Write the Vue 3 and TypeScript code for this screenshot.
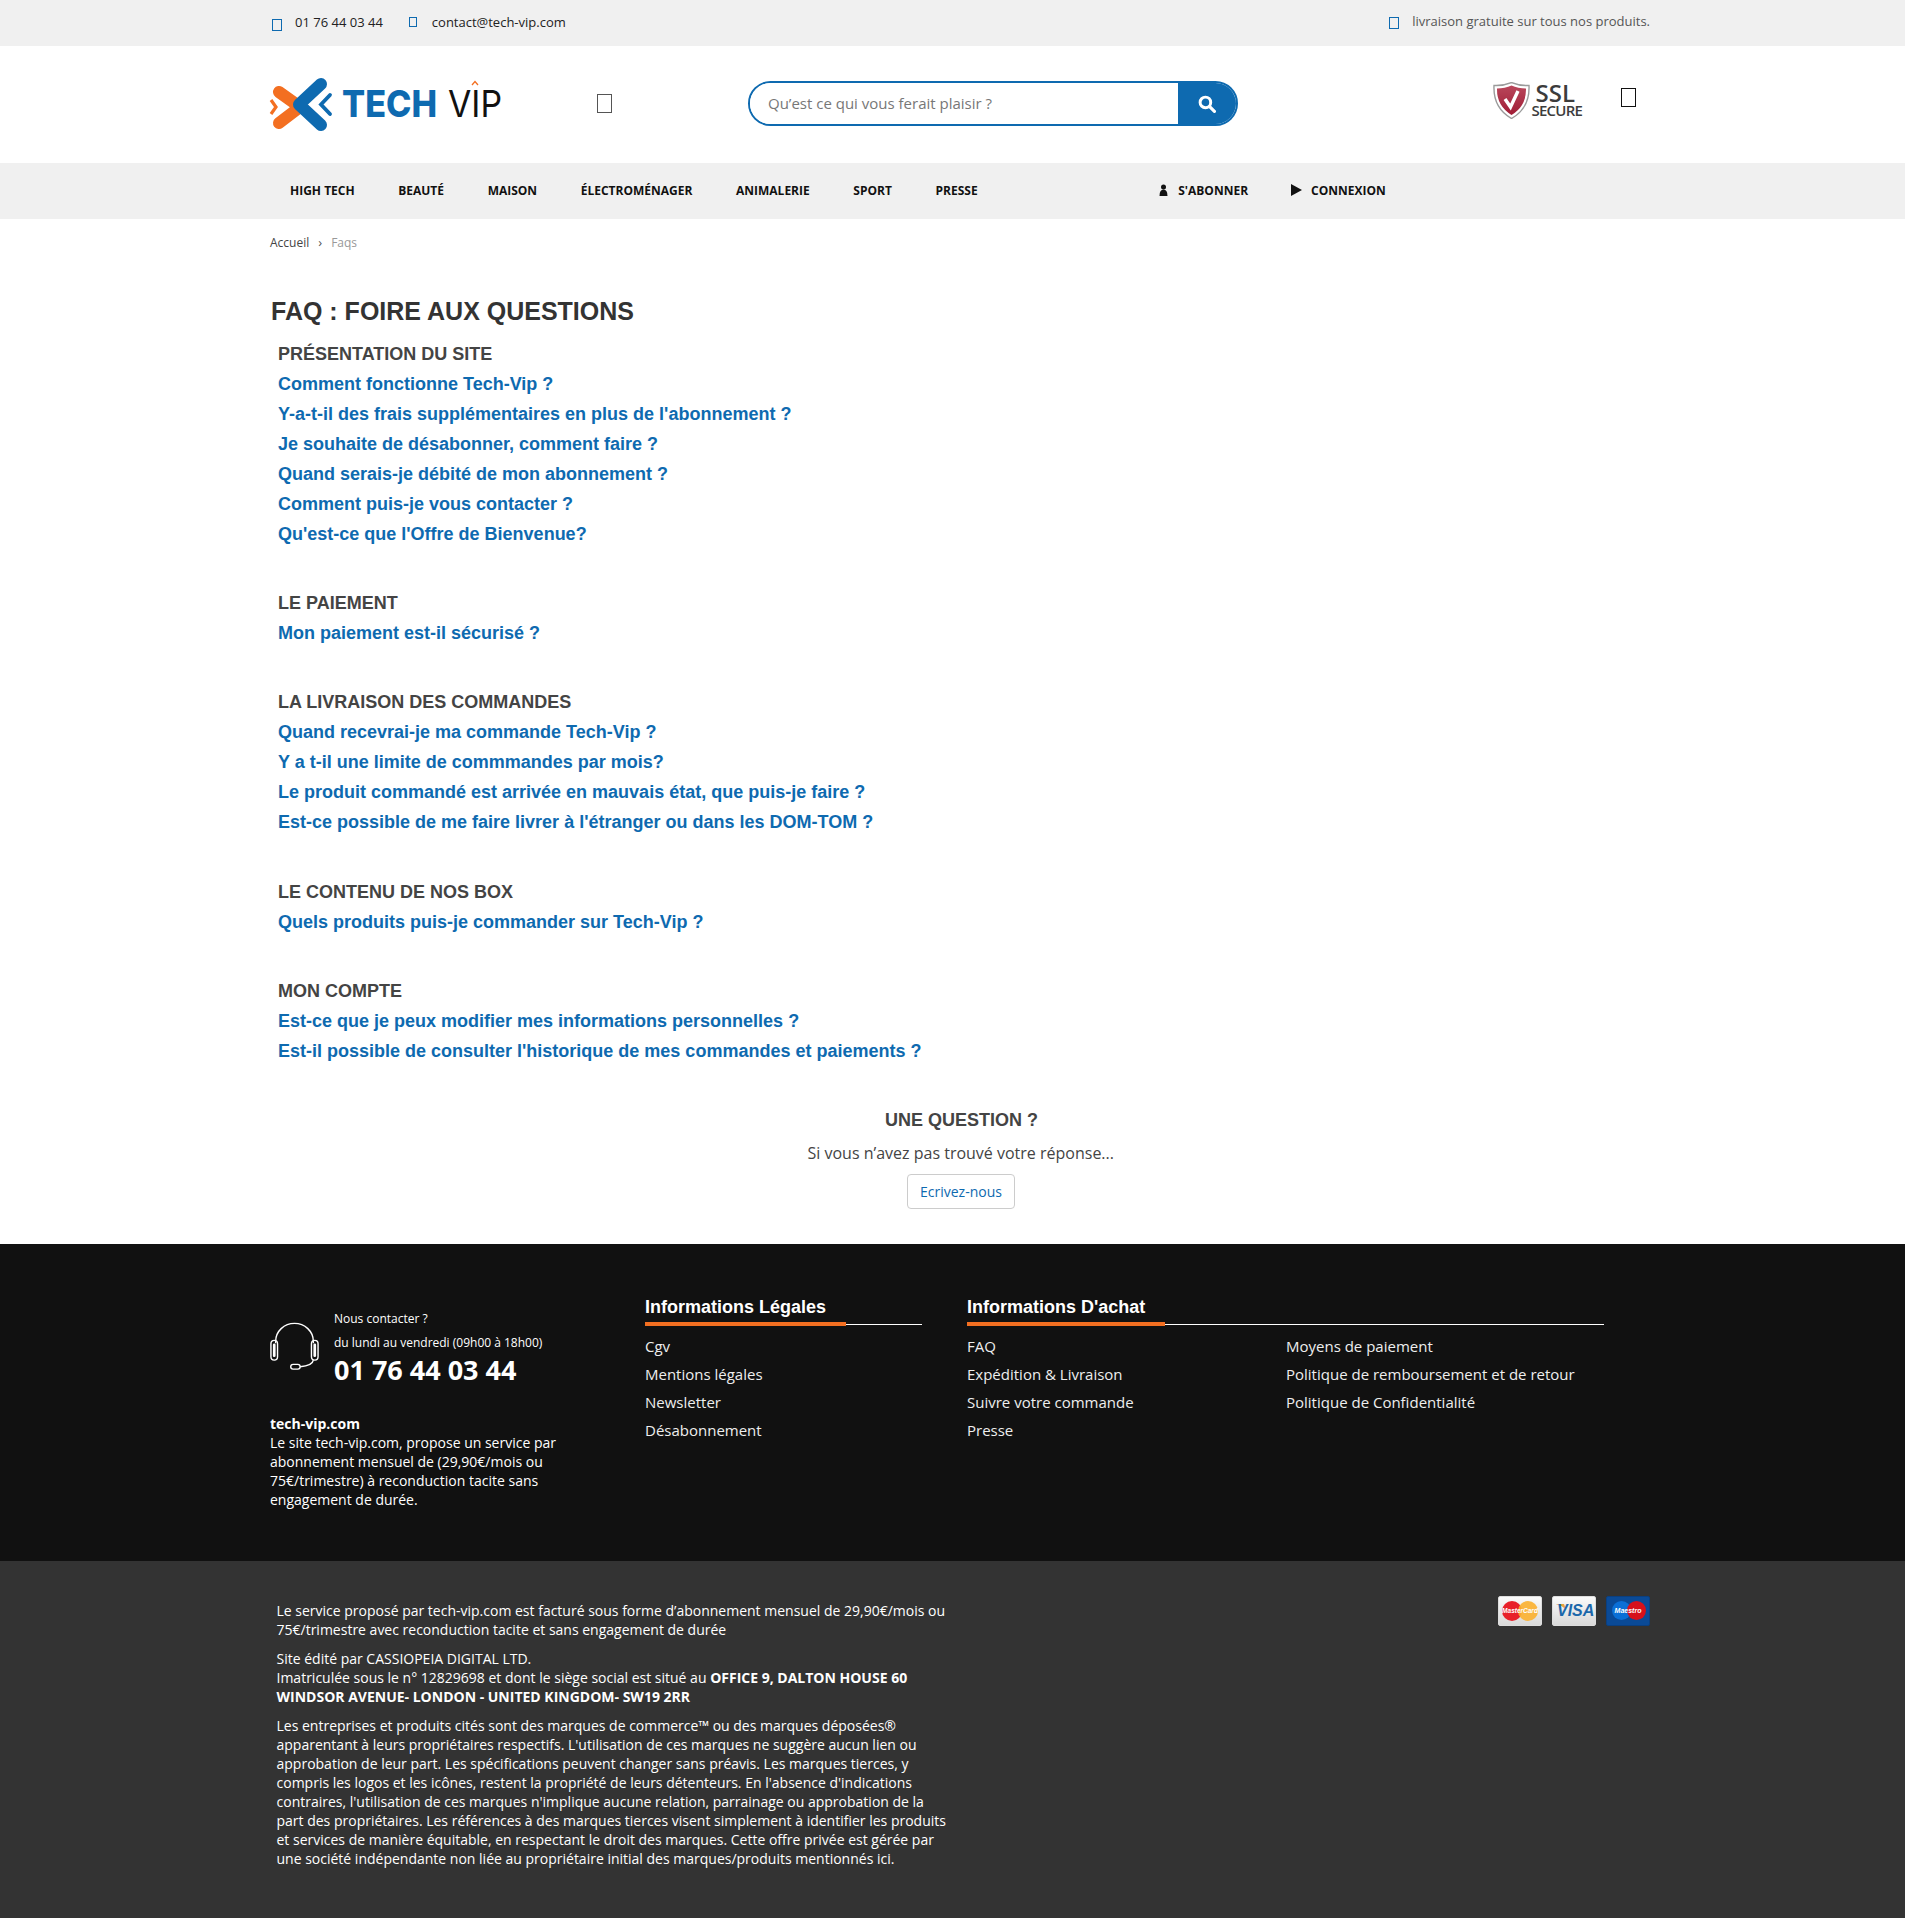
<script setup lang="ts">
interface Section { title: string; links: string[] }
const nav = ['High Tech', 'Beauté', 'Maison', 'Électroménager', 'Animalerie', 'Sport', 'Presse']
const sections: Section[] = [
  { title: 'Présentation du site', links: ['Comment fonctionne Tech-Vip ?', "Y-a-t-il des frais supplémentaires en plus de l'abonnement ?", 'Je souhaite de désabonner, comment faire ?', 'Quand serais-je débité de mon abonnement ?', 'Comment puis-je vous contacter ?', "Qu'est-ce que l'Offre de Bienvenue?"] },
  { title: 'Le paiement', links: ['Mon paiement est-il sécurisé ?'] },
  { title: 'La livraison des commandes', links: ['Quand recevrai-je ma commande Tech-Vip ?', 'Y a t-il une limite de commmandes par mois?', 'Le produit commandé est arrivée en mauvais état, que puis-je faire ?', "Est-ce possible de me faire livrer à l'étranger ou dans les DOM-TOM ?"] },
  { title: 'Le contenu de nos box', links: ['Quels produits puis-je commander sur Tech-Vip ?'] },
  { title: 'Mon compte', links: ['Est-ce que je peux modifier mes informations personnelles ?', "Est-il possible de consulter l'historique de mes commandes et paiements ?"] }
]
const legal = ['Cgv', 'Mentions légales', 'Newsletter', 'Désabonnement']
const achatA = ['FAQ', 'Expédition & Livraison', 'Suivre votre commande', 'Presse']
const achatB = ['Moyens de paiement', 'Politique de remboursement et de retour', 'Politique de Confidentialité']
</script>

<template>
  <div class="page">
    <div class="topbar">
      <div class="wrap topbar-in">
        <span class="tofu t-phone"></span><span class="top-text phone">01 76 44 03 44</span>
        <span class="tofu t-mail"></span><span class="top-text">contact@tech-vip.com</span>
        <span class="grow"></span>
        <span class="tofu t-ship"></span><span class="top-ship">livraison gratuite sur tous nos produits.</span>
      </div>
    </div>

    <header class="header">
      <div class="wrap header-in">
        <svg class="logo" width="240" height="62" viewBox="0 0 240 62">
          <path d="M10 18 L31 33 L10 49" fill="none" stroke="#f36f21" stroke-width="12" stroke-linecap="round" stroke-linejoin="round"/>
          <path d="M2 26 L7 33 L2 40" fill="none" stroke="#f36f21" stroke-width="3.2"/>
          <path d="M52 10 L30 30.5 L52 51" fill="none" stroke="#0e6ab0" stroke-width="12" stroke-linecap="round" stroke-linejoin="round"/>
          <path d="M61 21 L52 30.5 L61 40" fill="none" stroke="#0e6ab0" stroke-width="3.8" stroke-linecap="round"/>
          <text x="73" y="43" class="logo-tech" textLength="95" lengthAdjust="spacingAndGlyphs">TECH</text>
          <text x="179" y="43" class="logo-vip" textLength="54" lengthAdjust="spacingAndGlyphs">VIP</text>
          <path d="M203 11 L206 7.5 L209 11" fill="none" stroke="#f36f21" stroke-width="1.3"/>
        </svg>
        <span class="tofu t-head1"></span>
        <form class="search" @submit.prevent>
          <input class="search-input" type="text" placeholder="Qu’est ce qui vous ferait plaisir ?" />
          <button class="search-btn" type="submit" aria-label="Rechercher">
            <svg width="18" height="18" viewBox="0 0 17 17"><circle cx="7" cy="7" r="5" fill="none" stroke="#fff" stroke-width="2.8"/><path d="M11 11 L15.5 15.5" stroke="#fff" stroke-width="3" stroke-linecap="round"/></svg>
          </button>
        </form>
        <span class="grow"></span>
        <div class="ssl">
          <svg width="37" height="37" viewBox="0 0 37 37">
            <defs><linearGradient id="shield" x1="0" y1="0" x2="0" y2="1"><stop offset="0" stop-color="#b9475b"/><stop offset="1" stop-color="#a01c35"/></linearGradient></defs>
            <path d="M1 3.5 Q10 4 18.5 0.5 Q27 4 36 3.5 Q37 26 18.5 36.5 Q0 26 1 3.5Z" fill="#fff" stroke="#9b9b9b" stroke-width="1.4"/>
            <path d="M4 6.5 Q12 6.5 18.5 3.5 Q25 6.5 33 6.5 Q33.5 24 18.5 33 Q3.5 24 4 6.5Z" fill="url(#shield)"/>
            <path d="M12 17 L17.5 25 L25 9" fill="none" stroke="#fff" stroke-width="3.4"/>
          </svg>
          <div class="ssl-text"><span class="ssl-a">SSL</span><span class="ssl-b">SECURE</span></div>
        </div>
        <span class="tofu t-head2"></span>
      </div>
    </header>

    <nav class="nav">
      <div class="wrap nav-in">
        <a v-for="item in nav" :key="item" class="nav-link">{{ item }}</a>
        <span class="nav-gap"></span>
        <a class="nav-link nav-user">
          <svg width="11" height="12" viewBox="0 0 11 12"><circle cx="5.5" cy="3" r="2.5" fill="#111"/><path d="M1.5 12 Q1.5 5.4 5.5 5.4 Q9.5 5.4 9.5 12Z" fill="#111"/></svg>
          S'abonner
        </a>
        <a class="nav-link nav-user nav-login">
          <svg width="11" height="12" viewBox="0 0 11 12"><path d="M0 0 L11 6 L0 12Z" fill="#111"/></svg>
          Connexion
        </a>
      </div>
    </nav>

    <div class="wrap crumbs"><span>Accueil</span><span class="crumb-sep">›</span><span class="crumb-cur">Faqs</span></div>

    <main class="wrap main">
      <h1 class="title">FAQ : FOIRE AUX QUESTIONS</h1>
      <section v-for="s in sections" :key="s.title" class="section">
        <h2 class="section-title">{{ s.title }}</h2>
        <a v-for="l in s.links" :key="l" class="q">{{ l }}</a>
      </section>
      <div class="ask">
        <h3 class="ask-title">UNE QUESTION ?</h3>
        <p class="ask-text">Si vous n’avez pas trouvé votre réponse...</p>
        <a class="ask-btn">Ecrivez-nous</a>
      </div>
    </main>

    <footer class="foot">
      <div class="wrap foot-in">
        <div class="foot-about">
          <div class="contact">
            <svg width="49" height="50" viewBox="0 0 52 50" fill="none" stroke="#fff" stroke-width="1.5">
              <path d="M6 22 V20 A20 19 0 0 1 46 20 V22"/>
              <rect x="1" y="19" width="7" height="21" rx="3.5"/>
              <rect x="44" y="19" width="7" height="21" rx="3.5"/>
              <rect x="3.8" y="23" width="1.4" height="13" rx="0.7"/>
              <rect x="46.8" y="23" width="1.4" height="13" rx="0.7"/>
              <path d="M46 40 Q45 46 32 47"/>
              <rect x="22" y="44.5" width="10" height="5" rx="2.5"/>
            </svg>
            <div class="contact-text">
              <div class="c-small">Nous contacter ?</div>
              <div class="c-small c-hours">du lundi au vendredi (09h00 à 18h00)</div>
              <div class="c-phone">01 76 44 03 44</div>
            </div>
          </div>
          <p class="about"><b>tech-vip.com</b><br />Le site tech-vip.com, propose un service par abonnement mensuel de (29,90€/mois ou 75€/trimestre) à reconduction tacite sans engagement de durée.</p>
        </div>
        <div class="foot-legal">
          <h4 class="foot-h">Informations Légales</h4>
          <a v-for="l in legal" :key="l" class="foot-link">{{ l }}</a>
        </div>
        <div class="foot-achat">
          <h4 class="foot-h">Informations D'achat</h4>
          <div class="achat-cols">
            <div><a v-for="l in achatA" :key="l" class="foot-link">{{ l }}</a></div>
            <div><a v-for="l in achatB" :key="l" class="foot-link">{{ l }}</a></div>
          </div>
        </div>
      </div>
    </footer>

    <div class="legal">
      <div class="wrap legal-in">
        <div class="legal-text">
          <p>Le service proposé par tech-vip.com est facturé sous forme d’abonnement mensuel de 29,90€/mois ou 75€/trimestre avec reconduction tacite et sans engagement de durée</p>
          <p>Site édité par CASSIOPEIA DIGITAL LTD.<br />Imatriculée sous le n° 12829698 et dont le siège social est situé au <b>OFFICE 9, DALTON HOUSE 60 WINDSOR AVENUE- LONDON - UNITED KINGDOM- SW19 2RR</b></p>
          <p>Les entreprises et produits cités sont des marques de commerce™ ou des marques déposées® apparentant à leurs propriétaires respectifs. L'utilisation de ces marques ne suggère aucun lien ou approbation de leur part. Les spécifications peuvent changer sans préavis. Les marques tierces, y compris les logos et les icônes, restent la propriété de leurs détenteurs. En l'absence d'indications contraires, l'utilisation de ces marques n'implique aucune relation, parrainage ou approbation de la part des propriétaires. Les références à des marques tierces visent simplement à identifier les produits et services de manière équitable, en respectant le droit des marques. Cette offre privée est gérée par une société indépendante non liée au propriétaire initial des marques/produits mentionnés ici.</p>
        </div>
        <div class="cards">
          <div class="card card-light">
            <i class="disc d-red"></i><i class="disc d-amber"></i><span class="card-mc">MasterCard</span>
          </div>
          <div class="card card-light">
            <svg class="visa-flag" width="12" height="6" viewBox="0 0 14 8"><path d="M0 0 H11 L14 8 Q9 2 0 0Z" fill="#e8a33d"/></svg>
            <span class="card-visa">VISA</span>
          </div>
          <div class="card card-blue">
            <i class="disc d-blue"></i><i class="disc d-red2"></i><span class="card-ma">Maestro</span>
          </div>
        </div>
      </div>
    </div>
  </div>
</template>

<style>
html, body { margin: 0; background: #fff; }
</style>

<style scoped>
.page { width: 1905px; font-family: "Open Sans", "Noto Sans", sans-serif; color: #333; }
.wrap { width: 1380px; margin: 0 0 0 270px; box-sizing: border-box; }
.grow { flex: 1; }
.tofu { display: block; box-sizing: border-box; border: 1px solid #0e6ab0; flex: none; }

.topbar { height: 46px; background: #f0f0f0; }
.topbar-in { display: flex; height: 46px; align-items: center; font-size: 13px; }
.t-phone { width: 10px; height: 12px; margin: 3px 13px 0 2px; }
.t-mail { width: 8px; height: 10px; margin: -3px 15px 0 26px; }
.top-text { color: #222; margin-top: -3px; }
.top-ship { color: #555; margin-top: -4px; }
.t-ship { width: 10px; height: 12px; margin: 0 13px 0 0; }

.header { height: 117px; background: #fff; }
.header-in { display: flex; height: 117px; align-items: flex-start; }
.logo { display: block; margin-top: 28px; margin-left: -1px; flex: none; }
.t-head1 { width: 15px; height: 19px; margin: 48px 0 0 88px; border-color: #555; }
.search { display: flex; width: 490px; height: 45px; margin: 35px 0 0 136px; box-sizing: border-box; border: 2.5px solid #0e6ab0; border-radius: 23px; overflow: hidden; flex: none; }
.search-input { flex: 1; min-width: 0; border: 0; outline: 0; padding: 0 0 2px 18px; font: 15px "Open Sans", sans-serif; color: #333; background: #fff; }
.search-input::placeholder { color: #777; opacity: 1; }
.search-btn { width: 58px; border: 0; padding: 0; background: #0e6ab0; display: flex; align-items: center; justify-content: center; }
.ssl { display: flex; margin-top: 36px; }
.ssl svg { display: block; }
.ssl-text { display: flex; flex-direction: column; align-items: flex-end; width: 52px; color: #3c3c3c; line-height: 1; }
.ssl-a { font-size: 24px; font-weight: 600; line-height: 21px; margin-right: 7px; }
.ssl-b { font-size: 15px; font-weight: 600; line-height: 15px; letter-spacing: -.8px; }
.t-head2 { width: 15px; height: 19px; margin: 42px 14px 0 39px; border-color: #111; }

.nav { height: 56px; background: #f0f0f0; }
.nav-in { display: flex; height: 56px; box-sizing: border-box; padding: 0 0 2px 20px; align-items: center; }
.nav-link { font-size: 12px; font-weight: 700; text-transform: uppercase; color: #111; margin-right: 43.6px; white-space: nowrap; }
.nav-gap { width: 137px; }
.nav-user { display: flex; align-items: center; gap: 9px; margin-right: 43px; }
.crumbs { font-size: 12px; height: 48px; padding-bottom: 2px; display: flex; align-items: center; color: #444; }
.crumb-sep { margin: 0 9px; color: #555; font-size: 13px; }
.crumb-cur { color: #999; }

.main { padding-top: 27px; }
.title { margin: 0 0 0 1px; font: 700 25px/34px "Liberation Sans", Arial, sans-serif; color: #333; }
.section { padding-left: 8px; margin-top: 11px; margin-bottom: 39.2px; }
.section + .section { margin-top: 0; }
.section-title { margin: 0; font: 700 18px/30px "Liberation Sans", Arial, sans-serif; color: #444; text-transform: uppercase; }
.q { display: block; font: 700 18px/30px "Liberation Sans", Arial, sans-serif; color: #0e6ab0; }
.ask { width: 1380px; margin-top: 0; display: flex; flex-direction: column; align-items: flex-start; }
.ask-title { margin: 0 0 0 615px; font: 700 18px/30px "Liberation Sans", Arial, sans-serif; color: #444; }
.ask-text { margin: 6px 0 0 537.5px; font-size: 16px; line-height: 24px; color: #444; }
.ask-btn { margin: 9px 0 0 637px; box-sizing: border-box; height: 35px; padding: 0 12px; line-height: 33px; font-size: 14px; color: #0e6ab0; border: 1px solid #ccc; border-radius: 4px; }

.foot { margin-top: 35px; height: 317px; background: #111; color: #fff; }
.foot-in { display: flex; padding-top: 50px; }
.foot-about { width: 375px; flex: none; }
.contact { display: flex; }
.contact svg { margin-top: 27px; flex: none; display: block; }
.contact-text { margin-left: 15px; padding-top: 13px; }
.c-small { font-size: 12px; line-height: 24px; }
.c-phone { font-size: 27px; font-weight: 700; line-height: 32px; margin-top: -1px; }
.about { margin: 28px 0 0; font-size: 14px; line-height: 19px; width: 300px; }
.foot-legal { width: 277px; flex: none; margin-right: 45px; }
.foot-achat { width: 637px; flex: none; }
.foot-h { position: relative; margin: 0 0 7px; height: 31px; font: 700 18px/26px "Liberation Sans", Arial, sans-serif; color: #fff; border-bottom: 1px solid #fff; box-sizing: border-box; }
.foot-h::after { content: ""; position: absolute; left: 0; bottom: -2px; width: 201px; height: 4px; background: #f36f21; }
.foot-achat .foot-h::after { width: 198px; }
.foot-link { display: block; font-size: 15px; line-height: 28px; color: #eee; }
.achat-cols { display: grid; grid-template-columns: 319px 1fr; }

.legal { height: 357px; background: #333; color: #fff; }
.legal-in { display: flex; justify-content: space-between; padding: 40px 0 0 6.5px; }
.legal-text { width: 672px; font-size: 14px; line-height: 19px; }
.legal-text p { margin: 0 0 10px; }
.cards { display: flex; gap: 10px; margin-top: -5px; }
.card { position: relative; width: 44px; height: 30px; box-sizing: border-box; border-radius: 2px; overflow: hidden; }
.card-light { background: linear-gradient(#fafafa, #d9d9d9); border: 1px solid #ddd; }
.card-blue { background: #0a4a97; border: 1px solid #0a3f80; }
.disc { position: absolute; top: 4px; width: 20px; height: 20px; border-radius: 50%; }
.d-red { left: 3px; background: #e8202a; }
.d-amber { right: 3px; background: #fbb232; opacity: .92; }
.d-blue { left: 5px; width: 19px; height: 19px; background: #0b6fd6; }
.d-red2 { right: 3px; width: 19px; height: 19px; background: #d6101c; }
.card-mc, .card-ma { position: absolute; left: 0; right: 0; top: 8px; text-align: center; font: italic 700 6.5px/12px "Liberation Sans", Arial, sans-serif; color: #fff; white-space: nowrap; }
.card-ma { font-size: 7px; }
.card-visa { position: absolute; left: 4px; top: 4px; font: italic 700 16px/20px "Liberation Sans", Arial, sans-serif; color: #1b68ab; }
.visa-flag { position: absolute; left: 2px; top: 7px; }
.logo-tech { font: 800 37px Inter, "Open Sans", sans-serif; fill: #0e6ab0; }
.logo-vip { font: 400 37px Inter, "Open Sans", sans-serif; fill: #111; }
</style>
